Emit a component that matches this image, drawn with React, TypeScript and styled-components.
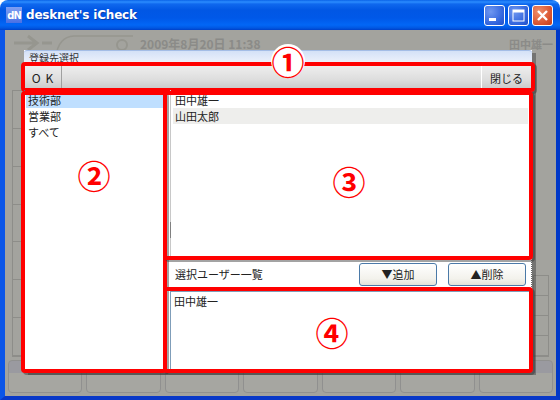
import React from "react";
import styled, { createGlobalStyle } from "styled-components";

const GlobalStyle = createGlobalStyle`
  html, body {
    margin: 0;
    padding: 0;
    background: #ffffff;
  }
`;

const jp = `"Noto Sans CJK JP", "Liberation Sans", sans-serif`;

const Window = styled.div`
  position: relative;
  width: 560px;
  height: 400px;
  overflow: hidden;
  display: flex;
  flex-direction: column;
  font-family: ${jp};
  font-size: 11px;
  color: #222;
  border-radius: 8px 8px 0 0;
`;

const TitleBar = styled.div`
  height: 30px;
  flex: none;
  display: flex;
  align-items: center;
  padding: 0 7px 0 6px;
  background: linear-gradient(
    180deg,
    #0a63e8 0,
    #2b8cff 2px,
    #0f68ee 4px,
    #0157e4 10px,
    #0058e8 18px,
    #0267f6 25px,
    #0157e2 28px,
    #0040c8 30px
  );
`;

const AppIcon = styled.div`
  width: 16px;
  height: 16px;
  display: flex;
  align-items: center;
  justify-content: center;
  background: linear-gradient(180deg, #7f9ff2, #4a70e4);
  color: #fff;
  font: bold 10px "DejaVu Sans", sans-serif;
  letter-spacing: -1px;
`;

const TitleText = styled.div`
  margin-left: 4px;
  flex: 1;
  color: #fff;
  font: bold 12px "DejaVu Sans", sans-serif;
  letter-spacing: -0.2px;
  text-shadow: 1px 1px 0 #0a3fb0;
`;

const Controls = styled.div`
  display: flex;
  gap: 3px;
`;

const ControlButton = styled.div<{ $close?: boolean }>`
  width: 21px;
  height: 21px;
  box-sizing: border-box;
  display: flex;
  align-items: center;
  justify-content: center;
  border: 1px solid #fff;
  border-radius: 3px;
  background: ${(p) =>
    p.$close
      ? "radial-gradient(circle at 30% 30%, #ef8f6c, #d8502c 70%, #c03f1e)"
      : "radial-gradient(circle at 30% 30%, #6f97f0, #2f62dc 70%, #2450c4)"};
`;

const Frame = styled.div`
  flex: 1;
  min-height: 0;
  display: flex;
  position: relative;
  border-style: solid;
  border-width: 0 4px 4px 5px;
  border-color: #0a4fe0 #0038c8 #0838c8 #0a55e8;
`;

const Backdrop = styled.div`
  flex: 1;
  display: flex;
  flex-direction: column;
  background: #a3a39e;
  color: #8b8b88;
  padding: 0 3px 3px;
`;

const DateRow = styled.div`
  height: 30px;
  flex: none;
  box-sizing: border-box;
  display: flex;
  align-items: center;
  padding: 0 0 3px 4px;
  font: bold 12px ${jp};
`;

const DateText = styled.span`
  margin-left: 7px;
  flex: 1;
`;

const DimName = styled.span`
  font-size: 11px;
`;

const DimColumns = styled.div`
  flex: 1;
  display: flex;
  justify-content: space-between;
  padding: 30px 4px 3px 4px;
`;

const DimTable = styled.div<{ $top?: number }>`
  width: 14px;
  margin-top: ${(p) => p.$top || 0}px;
  border: 1px solid #8d8d89;
  display: flex;
  flex-direction: column;
`;

const DimCell = styled.div`
  flex: 1;
  border-bottom: 1px solid #8d8d89;
`;

const DimTabs = styled.div`
  height: 33px;
  flex: none;
  display: flex;
  gap: 4px;
`;

const DimTab = styled.div`
  flex: 1;
  border: 1px solid #90908f;
  border-radius: 4px;
  background: linear-gradient(180deg, #9a9aa0 0, #9a9aa0 40%, #a6a6a1 40%);
`;

const Dialog = styled.div`
  position: absolute;
  left: 19px;
  top: 20px;
  width: 508px;
  height: 322px;
  display: flex;
  flex-direction: column;
  background: #fff;
  box-shadow: 4px 3px 0 rgba(60, 60, 60, 0.45);
`;

const Caption = styled.div`
  height: 15px;
  flex: none;
  box-sizing: border-box;
  padding: 0 0 0 5px;
  overflow: hidden;
  border-top: 1px solid #a4bde6;
  border-radius: 3px 3px 0 0;
  background: linear-gradient(180deg, #d4e1f7, #f2f5fc);
  font-size: 10px;
  line-height: 13px;
  color: #333;
`;

const Toolbar = styled.div`
  position: relative;
  height: 25px;
  flex: none;
  box-sizing: border-box;
  display: flex;
  justify-content: space-between;
  border: 1px dotted #666;
  background: linear-gradient(180deg, #eeeeee, #dddddd 60%, #c9c9c9);
`;

const ToolButton = styled.div<{ $right?: boolean }>`
  display: flex;
  align-items: center;
  justify-content: center;
  width: ${(p) => (p.$right ? 49 : 36)}px;
  border-left: ${(p) => (p.$right ? "1px solid #fff" : "none")};
  border-right: ${(p) => (p.$right ? "none" : "1px solid #a0a0a0")};
  font-size: ${(p) => (p.$right ? 11 : 12)}px;
  letter-spacing: ${(p) => (p.$right ? "0" : "1px")};
  color: #222;
`;

const Panes = styled.div`
  flex: 1;
  min-height: 0;
  display: grid;
  grid-template-columns: 141px 1fr;
`;

const GroupPane = styled.div`
  position: relative;
  box-sizing: border-box;
  padding: 2px 2px 0 1px;
  border-left: 1px dotted #5a6a80;
`;

const Row = styled.div<{ $tone?: string }>`
  height: 16px;
  line-height: 16px;
  padding-left: 2px;
  background: ${(p) => p.$tone || "transparent"};
  white-space: nowrap;
  color: #222;
`;

const RightColumn = styled.div`
  display: flex;
  flex-direction: column;
  min-width: 0;
`;

const UserPane = styled.div`
  position: relative;
  height: 168px;
  flex: none;
  display: flex;
  box-sizing: border-box;
  padding-left: 5px;
`;

const UserList = styled.div`
  flex: 1;
  box-sizing: border-box;
  padding: 2px 4px 0 2px;
  border-left: 1px solid #c8c8c8;
`;

const Grip = styled.div`
  position: absolute;
  left: 5px;
  top: 132px;
  width: 1px;
  height: 16px;
  background: #808080;
`;

const SelectionBar = styled.div`
  height: 33px;
  flex: none;
  box-sizing: border-box;
  display: flex;
  align-items: center;
  padding: 0 5px 1px 10px;
  gap: 11px;
  border-right: 1px dotted #666;
`;

const BarLabel = styled.div`
  flex: 1;
  color: #222;
`;

const ActionButton = styled.button`
  width: 78px;
  height: 23px;
  padding: 0;
  box-sizing: border-box;
  border: 1px solid #4b7aa8;
  border-radius: 3px;
  background: linear-gradient(180deg, #ffffff, #f3f2ec 70%, #e3e1d8);
  font-family: ${jp};
  font-size: 11px;
  color: #222;
`;

const PickedPane = styled.div`
  position: relative;
  flex: 1;
  display: flex;
  box-sizing: border-box;
  padding-left: 5px;
`;

const PickedList = styled.div`
  flex: 1;
  box-sizing: border-box;
  padding: 1px 0 0 1px;
  border-left: 1px solid #7f9db9;
  border-top: 1px solid #7f9db9;
`;

const Highlight = styled.div<{ $t: number; $r: number; $b: number; $l: number }>`
  position: absolute;
  top: ${(p) => p.$t}px;
  right: ${(p) => p.$r}px;
  bottom: ${(p) => p.$b}px;
  left: ${(p) => p.$l}px;
  border: 4px solid #ff0000;
  border-radius: 4px;
  box-shadow: 2px 2px 0 rgba(50, 50, 50, 0.45);
  pointer-events: none;
`;

const Marker = styled.div<{ $x: number; $y: number; $halo?: boolean }>`
  position: absolute;
  left: ${(p) => p.$x}px;
  top: ${(p) => p.$y}px;
  width: 30px;
  height: 30px;
  display: flex;
  align-items: center;
  justify-content: center;
  border-radius: 50%;
  background: ${(p) => (p.$halo ? "#fff" : "transparent")};
  box-shadow: ${(p) => (p.$halo ? "0 0 0 2px #fff" : "none")};
  color: #ff0000;
  font: bold 33px/30px ${jp};
`;

const tabs = [0, 1, 2, 3, 4, 5, 6];

function App() {
  return (
    <Window>
      <GlobalStyle />
      <TitleBar>
        <AppIcon>dN</AppIcon>
        <TitleText>desknet's iCheck</TitleText>
        <Controls>
          <ControlButton>
            <svg width="13" height="13" viewBox="0 0 13 13">
              <rect x="1" y="9" width="7" height="3" fill="#fff" />
            </svg>
          </ControlButton>
          <ControlButton>
            <svg width="13" height="13" viewBox="0 0 13 13">
              <rect x="1" y="1" width="11" height="11" fill="none" stroke="#fff" />
              <rect x="1" y="1" width="11" height="2.5" fill="#fff" />
            </svg>
          </ControlButton>
          <ControlButton $close>
            <svg width="13" height="13" viewBox="0 0 13 13">
              <path d="M2 2 L11 11 M11 2 L2 11" stroke="#fff" strokeWidth="2.4" />
            </svg>
          </ControlButton>
        </Controls>
      </TitleBar>
      <Frame>
        <Backdrop>
          <DateRow>
            <svg width="121" height="26" viewBox="0 0 121 26" fill="none" stroke="#96968f" strokeWidth="3">
              <path d="M2 12 H24 M16 5 L25 12 L16 19 M30 12 H40" />
              <path d="M44 26 Q46 6 62 5 H121" strokeWidth="1.5" />
              <circle cx="110" cy="14" r="5" strokeWidth="2" />
            </svg>
            <DateText>2009年8月20日 11:38</DateText>
            <DimName>田中雄一</DimName>
          </DateRow>
          <DimColumns>
            <DimTable>
              {tabs.map((t) => (
                <DimCell key={t} />
              ))}
            </DimTable>
            <DimTable $top={185}>
              {tabs.slice(0, 4).map((t) => (
                <DimCell key={t} />
              ))}
            </DimTable>
          </DimColumns>
          <DimTabs>
            {tabs.map((t) => (
              <DimTab key={t} />
            ))}
          </DimTabs>
        </Backdrop>
        <Dialog>
          <Caption>登録先選択</Caption>
          <Toolbar>
            <ToolButton>O K</ToolButton>
            <ToolButton $right>閉じる</ToolButton>
            <Highlight $t={-4} $r={-4} $b={-3} $l={-4} />
          </Toolbar>
          <Panes>
            <GroupPane>
              <Row $tone="#bfdfff">技術部</Row>
              <Row>営業部</Row>
              <Row>すべて</Row>
              <Highlight $t={1} $r={-2} $b={-1} $l={-4} />
            </GroupPane>
            <RightColumn>
              <UserPane>
                <UserList>
                  <Row>田中雄一</Row>
                  <Row $tone="#eeeeec">山田太郎</Row>
                </UserList>
                <Grip />
                <Highlight $t={1} $r={-1} $b={-2} $l={-2} />
              </UserPane>
              <SelectionBar>
                <BarLabel>選択ユーザー一覧</BarLabel>
                <ActionButton>▼追加</ActionButton>
                <ActionButton>▲削除</ActionButton>
              </SelectionBar>
              <PickedPane>
                <PickedList>
                  <Row>田中雄一</Row>
                </PickedList>
                <Highlight $t={-4} $r={-1} $b={-1} $l={-2} />
              </PickedPane>
            </RightColumn>
          </Panes>
        </Dialog>
      </Frame>
      <Marker $x={273} $y={46} $halo>①</Marker>
      <Marker $x={79} $y={160}>②</Marker>
      <Marker $x={334} $y={166}>③</Marker>
      <Marker $x={317} $y={317}>④</Marker>
    </Window>
  );
}

export default App;
